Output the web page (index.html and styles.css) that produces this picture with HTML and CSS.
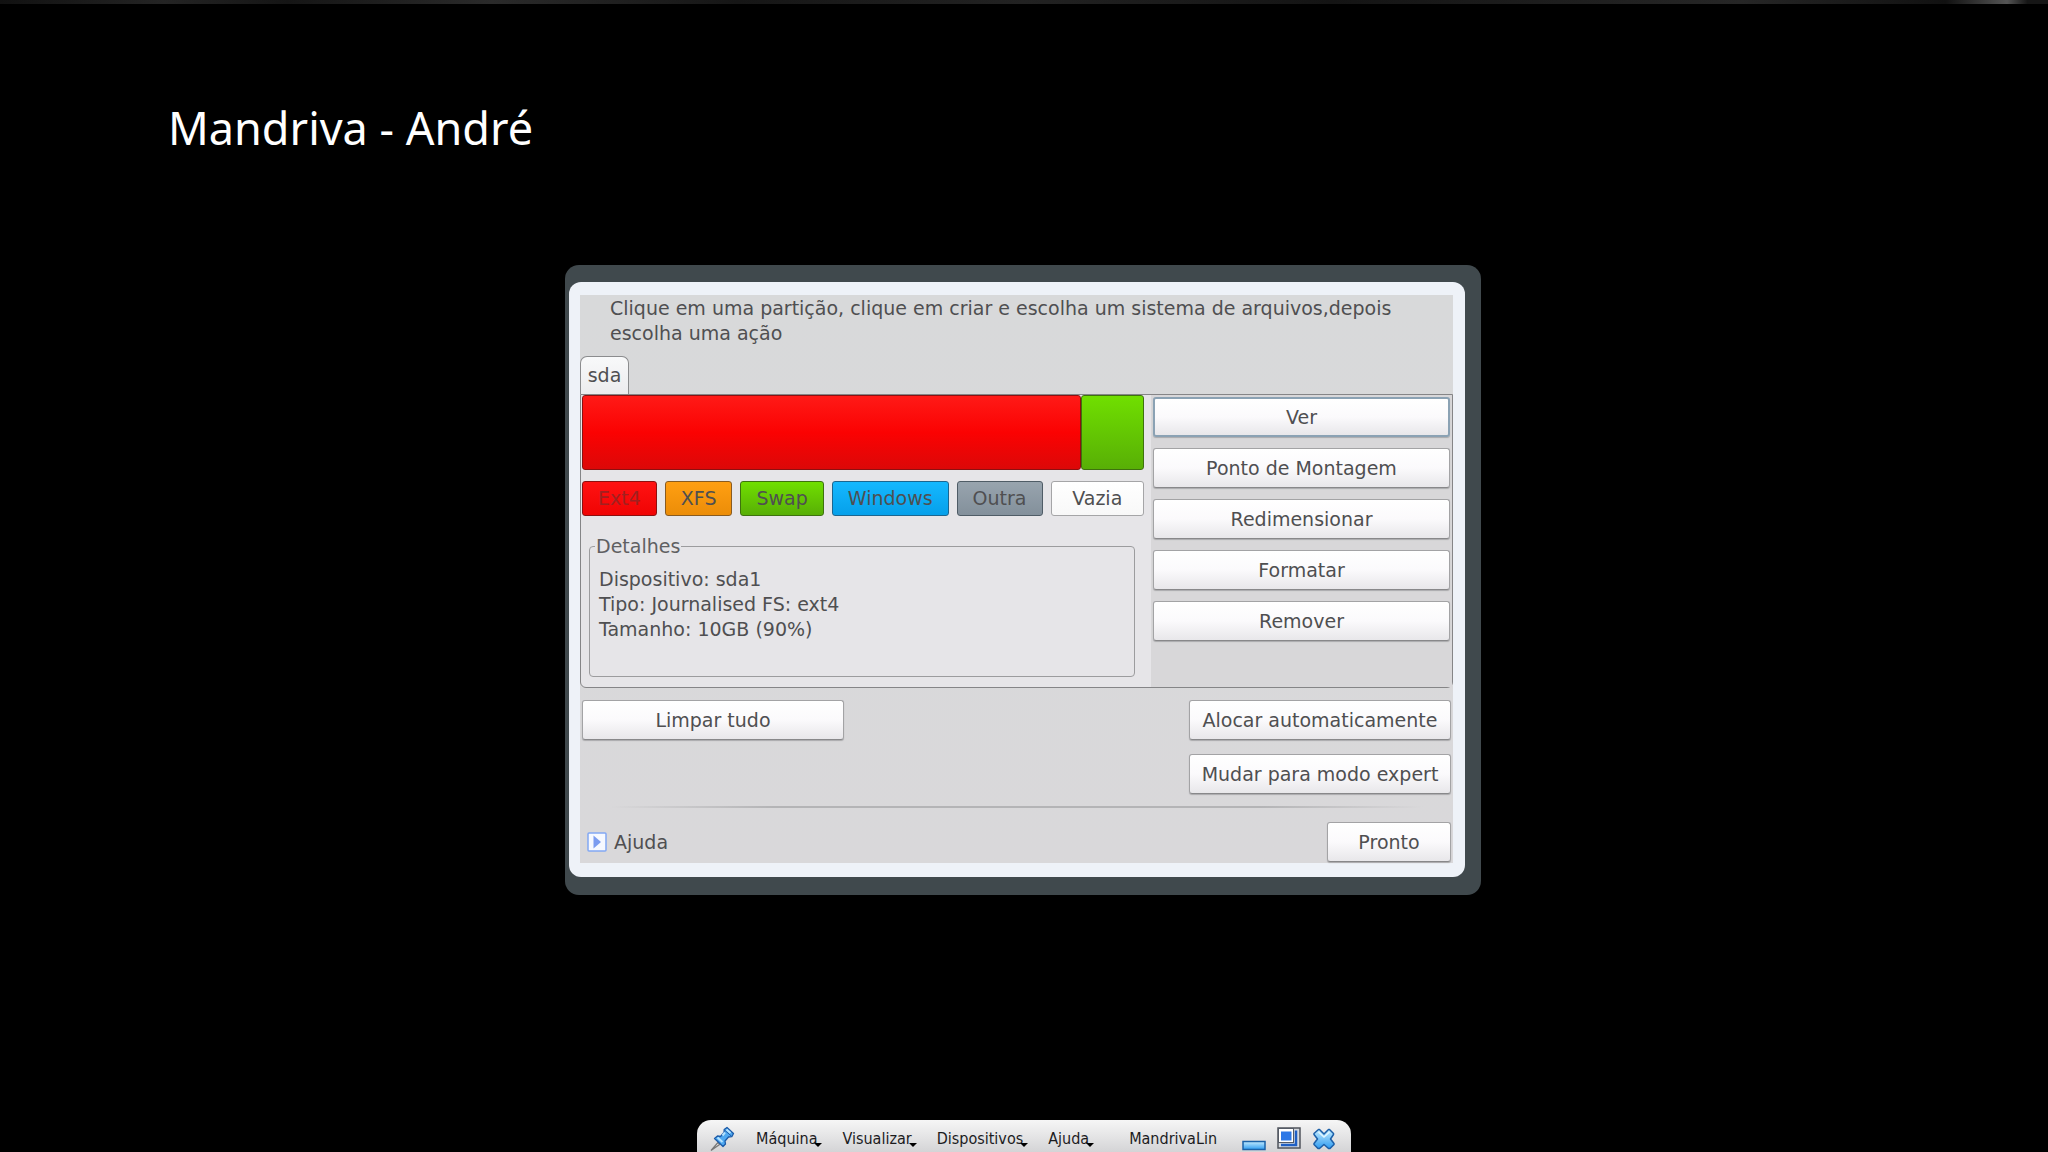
FILE: index.html
```html
<!DOCTYPE html>
<html lang="pt-BR">
<head>
<meta charset="utf-8">
<title>Mandriva - André</title>
<link rel="stylesheet" href="styles.css">
</head>
<body>
<div class="strip"></div>
<header class="slide-header"><h1>Mandriva - André</h1></header>
<main class="stage">
  <section class="frame">
    <div class="bezel">
      <div class="installer">
        <p class="intro">Clique em uma partição, clique em criar e escolha um sistema de arquivos,depois escolha uma ação</p>
        <div class="tabs" role="tablist"><button class="tab" role="tab" aria-selected="true">sda</button></div>
        <div class="disk">
          <div class="disk-info">
            <div class="partitions">
              <button class="part red" style="flex-grow: 89" aria-label="sda1"></button>
              <button class="part green" style="flex-grow: 11" aria-label="sda5"></button>
            </div>
            <div class="types">
              <button class="type red">Ext4</button>
              <button class="type orange">XFS</button>
              <button class="type green">Swap</button>
              <button class="type blue">Windows</button>
              <button class="type gray">Outra</button>
              <button class="type white">Vazia</button>
            </div>
            <fieldset class="details">
              <legend>Detalhes</legend>
              <div>Dispositivo: sda1</div>
              <div>Tipo: Journalised FS: ext4</div>
              <div>Tamanho: 10GB (90%)</div>
            </fieldset>
          </div>
          <div class="actions">
            <button class="btn focused">Ver</button>
            <button class="btn">Ponto de Montagem</button>
            <button class="btn">Redimensionar</button>
            <button class="btn">Formatar</button>
            <button class="btn">Remover</button>
          </div>
        </div>
        <div class="global">
          <button class="btn wide">Limpar tudo</button>
          <div class="global-right">
            <button class="btn wide">Alocar automaticamente</button>
            <button class="btn wide">Mudar para modo expert</button>
          </div>
        </div>
        <hr class="rule">
        <div class="bottom">
          <button class="help">
            <svg width="20" height="20" viewBox="0 0 20 20" aria-hidden="true"><rect x="1" y="1" width="18" height="18" rx="1" fill="#f6f9ff" stroke="#82a8f4" stroke-width="1.5"/><path d="M6.5 3.5v13L14 10z" fill="#7b9cf0"/></svg>
            Ajuda
          </button>
          <button class="btn done">Pronto</button>
        </div>
      </div>
    </div>
  </section>
</main>
<footer class="vmbar">
  <button class="tool pin" aria-label="Fixar">
    <svg width="26" height="26" viewBox="0 0 26 26"><path d="M9 16.500L2 24.500 10.500 18.500z" fill="#eee" stroke="#777" stroke-width="1.200"/><path d="M5.500 12.500l3-2.500 3 .5 3.500-4 .2-3L18 1.500l6.500 6-1.700 3.200-3.300.3-3.500 4 .5 3-2.500 2.500z" fill="#4fa8f0" stroke="#1c5ba8" stroke-width="1.300" stroke-linejoin="round"/><path d="M15.500 4l7 6.200" stroke="#1c5ba8"/><path d="M17.500 3.500l4 3.500M8.500 11.500l5 4.500M13.500 9.500l2.500-3" stroke="#b5e3ff" stroke-width="2"/></svg>
  </button>
  <nav class="menus">
    <button class="menu">Máquina<span class="caret"></span></button>
    <button class="menu">Visualizar<span class="caret"></span></button>
    <button class="menu">Dispositivos<span class="caret"></span></button>
    <button class="menu">Ajuda<span class="caret"></span></button>
  </nav>
  <span class="vmname">MandrivaLin</span>
  <div class="wincontrols">
    <button class="tool" aria-label="Minimizar"><svg width="24" height="24" viewBox="0 0 24 24"><defs><linearGradient id="b" x1="0" y1="0" x2="0" y2="1"><stop offset="0" stop-color="#c4ecff"/><stop offset="1" stop-color="#2f9cf0"/></linearGradient></defs><rect x="1" y="14.500" width="22" height="8" fill="url(#b)" stroke="#1b62a8" stroke-width="1.500"/></svg></button>
    <button class="tool" aria-label="Restaurar"><svg width="24" height="24" viewBox="0 0 24 24"><rect x="1" y="1" width="22" height="20" fill="#d4d8de" stroke="#50545c" stroke-width="1.500"/><path d="M4 18h15V3.500" fill="none" stroke="#1f5fc4" stroke-width="2.500"/><rect x="1.500" y="1.500" width="15" height="14" fill="#fff" stroke="#555b66"/><rect x="4" y="4.500" width="10.500" height="9" fill="#2d78e6"/></svg></button>
    <button class="tool" aria-label="Fechar"><svg width="24" height="24" viewBox="0 0 24 24"><path d="M6.500 2.500h1L12 7l4.500-4.500h1l4 4v1L18.500 12l3.500 4.500v1l-4 4h-1.500L12 17.500l-4.500 4H6l-4-4v-1L5.500 12 2 7.500v-1z" fill="url(#b)" stroke="#1b5fa8" stroke-width="1.500" stroke-linejoin="round"/><path d="M6.500 5l5.500 5L17.500 5" fill="none" stroke="#e1f6ff" stroke-width="1.500"/></svg></button>
  </div>
</footer>
</body>
</html>
```
FILE: styles.css
```css
* { box-sizing: border-box; }
body {
  margin: 0;
  min-height: 100vh;
  display: flex;
  flex-direction: column;
  background: #000;
  color: #4f4f51;
  font-family: "DejaVu Sans", sans-serif;
  font-size: 19px;
  line-height: 25px;
}
button {
  margin: 0;
  padding: 0;
  border: 0;
  background: none;
  color: inherit;
  font: inherit;
  white-space: nowrap;
}
.strip {
  height: 4px;
  background: linear-gradient(90deg, #111, #242424 8%, #151515 14%, #2a2a2a 24%, #161616 36%, #222 50%, #141414 65%, #262626 85%, #111 95%, #555 98%, #161616 99%);
}
.slide-header { padding: 94px 168px 0; }
h1 {
  margin: 0;
  color: #fff;
  font: 400 45px/60px "Noto Sans", sans-serif;
}
.stage {
  display: flex;
  justify-content: center;
  padding: 107px 26px 40px 24px;
}
.frame {
  width: 100%;
  max-width: 916px;
  padding: 17px 16px 18px 4px;
  border-radius: 14px;
  background: #40494d;
}
.bezel {
  padding: 13px 12px 14px 11px;
  border-radius: 12px;
  background: #eef2f8;
}
.installer { background: linear-gradient(#d8d9da, #d9d8da); }
.intro { margin: 0; padding: 1px 30px 0; }
.tabs { display: flex; padding-top: 10px; }
.tab {
  width: 49px;
  height: 38px;
  border: 1px solid #8b8c8e;
  border-bottom: 0;
  border-radius: 7px 7px 0 0;
  background: linear-gradient(#f8f9fa, #ececee);
}
.disk {
  display: flex;
  border: 1px solid #858587;
  border-radius: 0 0 6px 6px;
  background: #e6e5e8;
}
.disk-info { flex: 1; padding: 0 7px 10px 1px; }
.partitions { display: flex; height: 75px; }
.part { flex-basis: 0; border: 1px solid; border-radius: 3px; }
.types {
  display: flex;
  justify-content: space-between;
  gap: 8px;
  margin-top: 11px;
}
.type {
  padding: 0 15px;
  height: 35px;
  border: 1px solid #5d5d5d;
  border-radius: 3px;
}
.red { background: linear-gradient(#ff1a17, #fb0202 50%, #dc0808); border-color: #8d1010; }
.green { background: linear-gradient(#70df00, #58af06); border-color: #3e720e; }
.type.red { background: linear-gradient(#ff1212, #f00404); color: #a12020; }
.orange { background: linear-gradient(#ff9f12, #ec8d08); border-color: #895b20; }
.blue { background: linear-gradient(#15b8ff, #06a0ea); border-color: #1c6690; }
.gray { background: linear-gradient(#98a4ae, #83909b); border-color: #4f5c66; }
.white { flex-grow: 1; background: linear-gradient(#fff, #f8f8f8); border-color: #a5a5a7; }
.details {
  min-height: 143px;
  margin: 18px 9px 0 7px;
  padding: 8px 9px 0;
  border: 1px solid #9c9c9e;
  border-radius: 4px;
}
.details legend { margin-left: -4px; padding: 0 1px; color: #606062; }
.actions {
  flex: 0 0 301px;
  display: flex;
  flex-direction: column;
  gap: 11px;
  padding: 2px 2px 45px 2px;
  background: #d8d7d9;
}
.btn {
  height: 40px;
  border: 1px solid #a3a3a5;
  border-bottom-color: #88888a;
  border-radius: 3px;
  background: linear-gradient(#fff, #fbfafc 50%, #e8e7ea);
  box-shadow: 0 1px 1px #aaaaac;
}
.focused { border: 2px solid #8ba2b4; }
.wide { width: 262px; }
.global {
  display: flex;
  justify-content: space-between;
  align-items: flex-start;
  padding: 12px 2px;
}
.global-right { display: flex; flex-direction: column; gap: 14px; }
.rule {
  height: 2px;
  margin: 0 30px;
  border: 0;
  background: linear-gradient(90deg, transparent, #b4b4b6 20%, #b4b4b6 80%, transparent);
}
.bottom {
  display: flex;
  justify-content: space-between;
  align-items: center;
  padding: 14px 2px 1px 7px;
}
.help { display: flex; align-items: center; gap: 7px; }
.done { width: 124px; }
.vmbar {
  display: flex;
  align-items: center;
  align-self: center;
  width: 654px;
  max-width: 100%;
  height: 32px;
  margin-top: auto;
  padding: 5px 15px 0 12px;
  border-radius: 14px 14px 0 0;
  background: linear-gradient(#f6f6f6, #d4d4d6);
  color: #1c1c1e;
  font: 16px/20px "DejaVu Sans Condensed", "DejaVu Sans", sans-serif;
}
.tool { display: flex; }
.menus { display: flex; gap: 20px; margin-left: 21px; }
.menu { display: flex; align-items: flex-end; }
.caret {
  margin: 0 0 2px -3px;
  border: 4px solid transparent;
  border-top-color: #000;
  border-bottom: 0;
}
.vmname { margin-left: 35px; }
.wincontrols { display: flex; gap: 11px; margin-left: auto; }
```
